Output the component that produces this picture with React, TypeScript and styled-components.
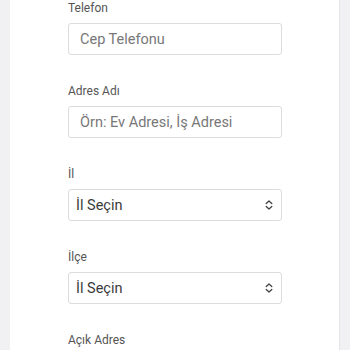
import React from 'react';
import styled, { createGlobalStyle } from 'styled-components';

const GlobalStyle = createGlobalStyle`
  html, body {
    margin: 0;
    padding: 0;
    background: #f1f1f3;
    font-family: Roboto, 'Liberation Sans', Arial, sans-serif;
  }
`;

const Page = styled.div`
  display: flex;
  padding: 0 10px;
  height: 350px;
  overflow: hidden;
`;

const Panel = styled.div`
  flex: 1;
  background: #ffffff;
  border-right: 1px solid #e4e4e6;
  padding: 0 0 0 58px;
`;

const Field = styled.div`
  display: flex;
  flex-direction: column;
  width: 214px;
  margin-bottom: 28px;
`;

const Label = styled.label`
  height: 16px;
  line-height: 16px;
  font-size: 12px;
  color: #555;
  margin-bottom: 7px;
`;

const Box = styled.div<{ select?: boolean }>`
  box-sizing: border-box;
  height: 32px;
  border: 1px solid #dcdcdc;
  border-radius: 3px;
  background: #fff;
  display: flex;
  align-items: center;
  justify-content: space-between;
  padding: ${({ select }) => (select ? '0 8px 0 7px' : '0 11px')};
  font-size: 14.5px;
  color: ${({ select }) => (select ? '#3a3a3a' : '#777')};
`;

const Chevrons = () => (
  <svg width="8" height="10" viewBox="0 0 8 10" fill="none">
    <path d="M1.2 3.6 L4 1 L6.8 3.6" stroke="#444" strokeWidth="1.3" strokeLinecap="round" strokeLinejoin="round" />
    <path d="M1.2 6.4 L4 9 L6.8 6.4" stroke="#444" strokeWidth="1.3" strokeLinecap="round" strokeLinejoin="round" />
  </svg>
);

const fields = [
  { label: 'Telefon', value: 'Cep Telefonu', select: false },
  { label: 'Adres Adı', value: 'Örn: Ev Adresi, İş Adresi', select: false },
  { label: 'İl', value: 'İl Seçin', select: true },
  { label: 'İlçe', value: 'İl Seçin', select: true },
];

const App: React.FC = () => (
  <>
    <GlobalStyle />
    <Page>
      <Panel>
        {fields.map((f) => (
          <Field key={f.label}>
            <Label>{f.label}</Label>
            <Box select={f.select}>
              <span>{f.value}</span>
              {f.select && <Chevrons />}
            </Box>
          </Field>
        ))}
        <Field>
          <Label>Açık Adres</Label>
        </Field>
      </Panel>
    </Page>
  </>
);

export default App;
